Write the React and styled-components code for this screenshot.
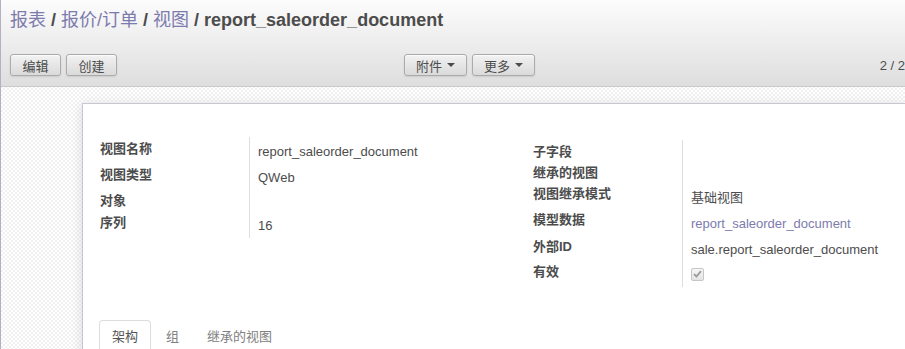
import React from 'react';
import styled, { createGlobalStyle } from 'styled-components';

const GlobalStyle = createGlobalStyle`
  html, body {
    margin: 0;
    padding: 0;
    overflow: hidden;
  }
  body {
    font-family: "Liberation Sans", "Noto Sans CJK SC", sans-serif;
    font-size: 13px;
    color: #4c4c4c;
  }
`;

const Page = styled.div`
  min-height: 100vh;
  border-left: 1px solid #b4b2c2;
  background-color: #fff;
  background-image: conic-gradient(#f1f1f1 25%, #fff 0 50%, #f1f1f1 0 75%, #fff 0);
  background-size: 4px 4px;
  overflow: hidden;
`;

const Header = styled.div`
  height: 87px;
  box-sizing: border-box;
  padding: 5px 0 0 9px;
  background: linear-gradient(#fcfcfc, #dedede);
  border-bottom: 1px solid #cacaca;
`;

const Title = styled.h2`
  margin: 0;
  font-size: 18px;
  line-height: 30px;
  font-weight: bold;
  white-space: nowrap;
`;

const Crumb = styled.a`
  color: #7c7bad;
  font-weight: normal;
  text-decoration: none;
`;

const Sep = styled.span`
  color: #4c4c4c;
  font-weight: bold;
`;

const Current = styled.span`
  color: #4c4c4c;
`;

const Toolbar = styled.div`
  display: grid;
  grid-template-columns: 394px auto 1fr;
  align-items: center;
  margin-top: 19px;
`;

const ButtonGroup = styled.div`
  display: flex;
  gap: 5px;
`;

const Button = styled.button`
  display: inline-flex;
  align-items: center;
  justify-content: center;
  gap: 5px;
  height: 22px;
  min-width: ${({ $wide }) => ($wide ? '63px' : '51px')};
  padding: 0 8px;
  border: 1px solid #ababab;
  border-radius: 3px;
  background: linear-gradient(#f2f2f2, #dadada);
  box-shadow: 0 1px 2px rgba(0, 0, 0, 0.1), inset 0 1px 1px rgba(255, 255, 255, 0.8);
  font-family: inherit;
  font-size: 13px;
  color: #4c4c4c;
  cursor: pointer;
`;

const Caret = styled.span`
  width: 0;
  height: 0;
  border-top: 4px solid #4c4c4c;
  border-left: 4px solid transparent;
  border-right: 4px solid transparent;
`;

const Pager = styled.div`
  justify-self: end;
  font-size: 13px;
  color: #4c4c4c;
  white-space: nowrap;
`;

const Content = styled.div`
  padding: 16px 0 0 81px;
`;

const Sheet = styled.div`
  background: #fff;
  border: 1px solid #c8c6d3;
  border-right: none;
  box-shadow: 0 2px 12px rgba(0, 0, 0, 0.12);
  padding: 33px 0 0 17px;
  height: 260px;
`;

const Groups = styled.div`
  display: grid;
  grid-template-columns: 433px 1fr;
  align-items: start;
`;

const Group = styled.div`
  display: grid;
  grid-template-columns: 149px 1fr;
  margin-top: ${({ $offset }) => $offset || 0}px;
`;

const Label = styled.div`
  height: ${({ $h }) => $h}px;
  box-sizing: border-box;
  padding-top: 3px;
  line-height: 17px;
  font-weight: bold;
  color: #4c4c4c;
  white-space: nowrap;
`;

const Value = styled.div`
  height: ${({ $h }) => $h}px;
  box-sizing: border-box;
  padding: ${({ $pad }) => $pad}px 0 0 8px;
  line-height: 17px;
  border-left: 1px solid #dedede;
  color: ${({ $link }) => ($link ? '#7c7bad' : '#4c4c4c')};
  white-space: nowrap;
`;

const CheckBox = styled.span`
  display: inline-flex;
  align-items: center;
  justify-content: center;
  width: 11px;
  height: 11px;
  margin-top: 1px;
  border: 1px solid #c6c6c6;
  border-radius: 2px;
  background: linear-gradient(#f6f6f6, #e4e4e4);
`;

const Tabs = styled.div`
  display: flex;
  gap: 2px;
  margin-top: 33px;
  margin-left: -1px;
`;

const Tab = styled.div`
  padding: 7px 12px 8px;
  line-height: 17px;
  border: 1px solid ${({ $active }) => ($active ? '#dddddd' : 'transparent')};
  border-bottom: none;
  border-radius: 4px 4px 0 0;
  color: ${({ $active }) => ($active ? '#555555' : '#808080')};
  background: #fff;
`;

const leftRows = [
  { label: '视图名称', value: 'report_saleorder_document', h: 26, pad: 6 },
  { label: '视图类型', value: 'QWeb', h: 26, pad: 6 },
  { label: '对象', value: '', h: 22, pad: 6 },
  { label: '序列', value: '16', h: 27, pad: 6 },
];

const rightRows = [
  { label: '子字段', value: '', h: 21, pad: 4 },
  { label: '继承的视图', value: '', h: 21, pad: 4 },
  { label: '视图继承模式', value: '基础视图', h: 26, pad: 7 },
  { label: '模型数据', value: 'report_saleorder_document', h: 27, pad: 7 },
  { label: '外部ID', value: 'sale.report_saleorder_document', h: 25, pad: 6 },
  { label: '有效', check: true, h: 27, pad: 5 },
];
rightRows[3].link = true;

const tabs = ['架构', '组', '继承的视图'];

const FieldGroup = ({ rows, offset }) => (
  <Group $offset={offset}>
    {rows.map((row) => (
      <React.Fragment key={row.label}>
        <Label $h={row.h}>{row.label}</Label>
        <Value $h={row.h} $pad={row.pad} $link={row.link}>
          {row.check ? (
            <CheckBox>
              <svg width="9" height="8" viewBox="0 0 9 8">
                <path d="M1 4.2 L3.4 6.5 L8 1.2" fill="none" stroke="#9a9a9a" strokeWidth="1.8" />
              </svg>
            </CheckBox>
          ) : row.value}
        </Value>
      </React.Fragment>
    ))}
  </Group>
);

const App = () => (
  <>
    <GlobalStyle />
    <Page>
      <Header>
        <Title>
          <Crumb href="#">报表</Crumb><Sep> / </Sep>
          <Crumb href="#">报价/订单</Crumb><Sep> / </Sep>
          <Crumb href="#">视图</Crumb><Sep> / </Sep>
          <Current>report_saleorder_document</Current>
        </Title>
        <Toolbar>
          <ButtonGroup>
            <Button>编辑</Button>
            <Button>创建</Button>
          </ButtonGroup>
          <ButtonGroup>
            <Button $wide>附件 <Caret /></Button>
            <Button $wide>更多 <Caret /></Button>
          </ButtonGroup>
          <Pager>2 / 2</Pager>
        </Toolbar>
      </Header>
      <Content>
        <Sheet>
          <Groups>
            <FieldGroup rows={leftRows} />
            <FieldGroup rows={rightRows} offset={3} />
          </Groups>
          <Tabs>
            {tabs.map((tab, i) => (
              <Tab key={tab} $active={i === 0}>{tab}</Tab>
            ))}
          </Tabs>
        </Sheet>
      </Content>
    </Page>
  </>
);

export default App;
